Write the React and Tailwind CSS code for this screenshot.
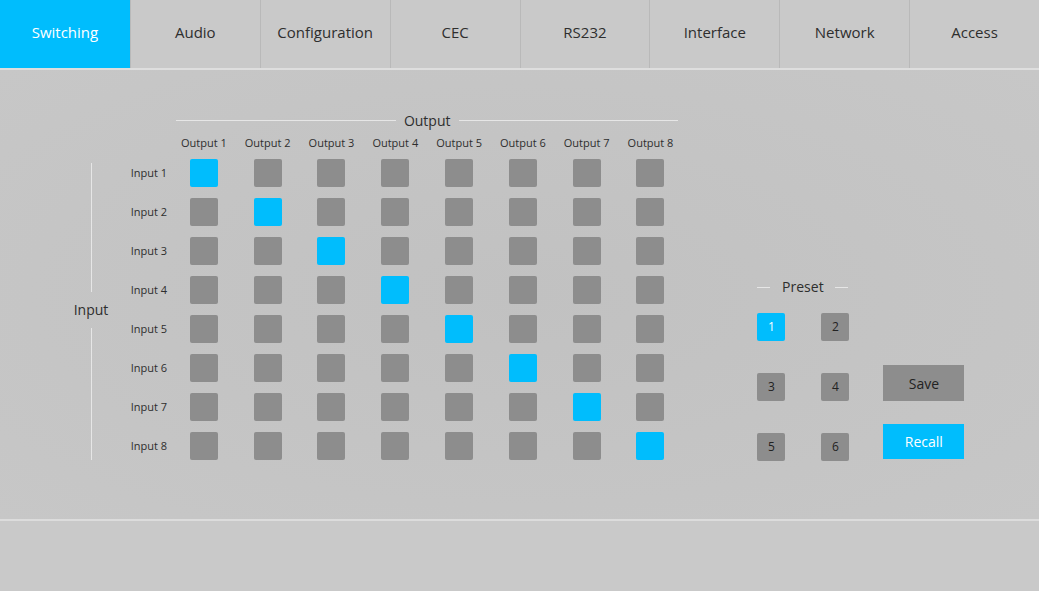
const tabs = ['Switching', 'Audio', 'Configuration', 'CEC', 'RS232', 'Interface', 'Network', 'Access'];
const outputs = [1, 2, 3, 4, 5, 6, 7, 8];

const Cell = ({ on }) => (
  <div className={`h-[28px] w-[28px] rounded-[2px] ${on ? 'bg-[#00bdfd]' : 'bg-[#8d8d8d]'}`}></div>
);

const PresetBtn = ({ n, on }) => (
  <div
    className={`flex h-[28px] w-[28px] items-center justify-center rounded-[2px] text-[12px] ${
      on ? 'bg-[#00bdfd] text-white' : 'bg-[#8d8d8d] text-[#222]'
    }`}
  >
    {n}
  </div>
);

export default function App() {
  return (
    <div className="h-[591px] w-[1039px] overflow-hidden bg-[#c9c9c9] text-[#2e2e2e]" style={{ fontFamily: '"Open Sans", "Noto Sans", sans-serif' }}>
      {/* tabs */}
      <div className="grid h-[68px] grid-cols-8">
        {tabs.map((t, i) => (
          <div
            key={t}
            className={`flex items-center justify-center pb-[4px] text-[15px] ${
              i === 0 ? 'bg-[#00bdfd] text-white' : 'border-l border-[#b9b9b9] bg-[#c9c9c9] text-[#2e2e2e]'
            }`}
          >
            {t}
          </div>
        ))}
      </div>
      <div className="h-[2px] bg-[#dedede]"></div>

      {/* main */}
      <div className="h-[449px] bg-[radial-gradient(ellipse_at_center,#c1c1c1,#c7c7c7)] pt-[39px]">
        <div className="flex items-end">
          <div className="grid grid-cols-[130px_42px_repeat(8,63.8px)] grid-rows-[23.5px_21px_repeat(8,39px)]">
            {/* Output title */}
            <div className="col-span-2"></div>
            <div className="col-span-8 flex items-center px-[4px]">
              <div className="h-px flex-1 bg-[#e6e6e6]"></div>
              <span className="px-[8px] text-[14px] leading-none">Output</span>
              <div className="h-px flex-1 bg-[#e6e6e6]"></div>
            </div>

            {/* output labels */}
            <div className="col-span-2"></div>
            {outputs.map((o) => (
              <div key={o} className="flex items-center justify-center whitespace-nowrap text-[11px]">
                Output {o}
              </div>
            ))}

            {/* Input vertical label */}
            <div className="row-span-8 row-start-3 flex flex-col items-center pl-[52px] pt-[9.5px] pb-[5.5px]">
              <div className="h-[129px] w-px bg-[#e6e6e6]"></div>
              <span className="flex h-[36px] items-center pb-[2px] text-[14px] leading-[15px]">Input</span>
              <div className="w-px flex-1 bg-[#e6e6e6]"></div>
            </div>

            {outputs.map((r) => (
              <div key={r} className="contents">
                <div className="col-start-2 flex items-center justify-end whitespace-nowrap pr-[5px] text-[11px]">
                  Input {r}
                </div>
                {outputs.map((c) => (
                  <div key={c} className="flex items-center justify-center">
                    <Cell on={r === c} />
                  </div>
                ))}
              </div>
            ))}
          </div>

          {/* preset */}
          <div className="mb-[4.5px] ml-[75px] flex items-end">
            <div className="flex flex-col">
              <div className="mb-[16px] flex h-[20px] w-[91px] items-center">
                <div className="h-px w-[13px] bg-[#e6e6e6]"></div>
                <span className="flex-1 text-center text-[14px] leading-none">Preset</span>
                <div className="h-px w-[13px] bg-[#e6e6e6]"></div>
              </div>
              <div className="grid grid-cols-[28px_28px] gap-x-[36px] gap-y-[32px]">
                {[1, 2, 3, 4, 5, 6].map((n) => (
                  <PresetBtn key={n} n={n} on={n === 1} />
                ))}
              </div>
            </div>
            <div className="mb-[2px] ml-[34px] flex flex-col gap-[23px]">
              <div className="flex h-[36px] w-[81px] items-center justify-center bg-[#8d8d8d] text-[14px] text-[#222]">
                Save
              </div>
              <div className="flex h-[35px] w-[81px] items-center justify-center bg-[#00bdfd] text-[14px] text-white">
                Recall
              </div>
            </div>
          </div>
        </div>
      </div>
      <div className="h-[2px] bg-[#dcdcdc]"></div>
    </div>
  );
}
